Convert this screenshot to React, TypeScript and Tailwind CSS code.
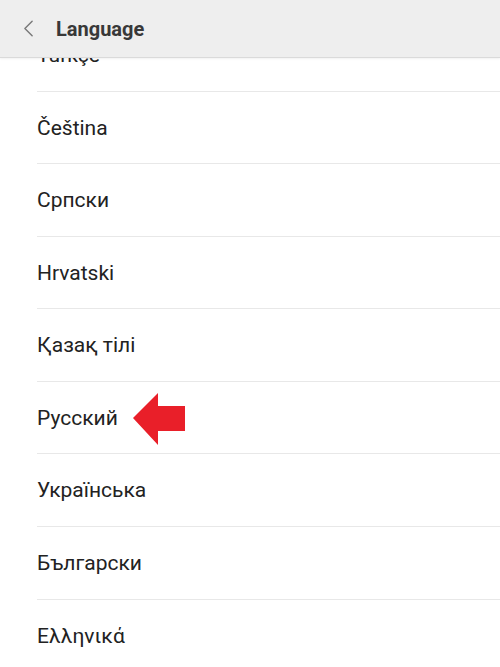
import { ChevronLeft } from "lucide-react";

const languages = [
  "Türkçe",
  "Čeština",
  "Српски",
  "Hrvatski",
  "Қазақ тілі",
  "Русский",
  "Українська",
  "Български",
  "Ελληνικά",
];

function RedArrow() {
  return (
    <svg width="54" height="54" viewBox="0 0 54 54" className="ml-[14px] shrink-0">
      <polygon points="1,26 26,1 26,14 53,14 53,39 26,39 26,53" fill="#e91f29" />
    </svg>
  );
}

export default function App() {
  return (
    <div className="relative h-[667px] w-[500px] overflow-hidden bg-white font-['Roboto',sans-serif]">
      <header className="relative z-10 flex h-[58px] items-center border-b border-[#dadada] bg-[#eeeeee] shadow-[0_1px_2px_rgba(0,0,0,0.06)]">
        <ChevronLeft className="ml-[14px] text-[#7a7a7a]" size={29} strokeWidth={1.2} />
        <h1 className="ml-[13px] text-[20px] font-bold text-[#383838]">Language</h1>
      </header>

      <ul className="-mt-[39px] pl-[37px]">
        {languages.map((lang) => (
          <li
            key={lang}
            className="flex h-[72.57px] items-center border-b border-[#e8e8e8] pt-[2px] text-[21px] text-[#222222]"
          >
            <span>{lang}</span>
            {lang === "Русский" && <RedArrow />}
          </li>
        ))}
      </ul>
    </div>
  );
}
